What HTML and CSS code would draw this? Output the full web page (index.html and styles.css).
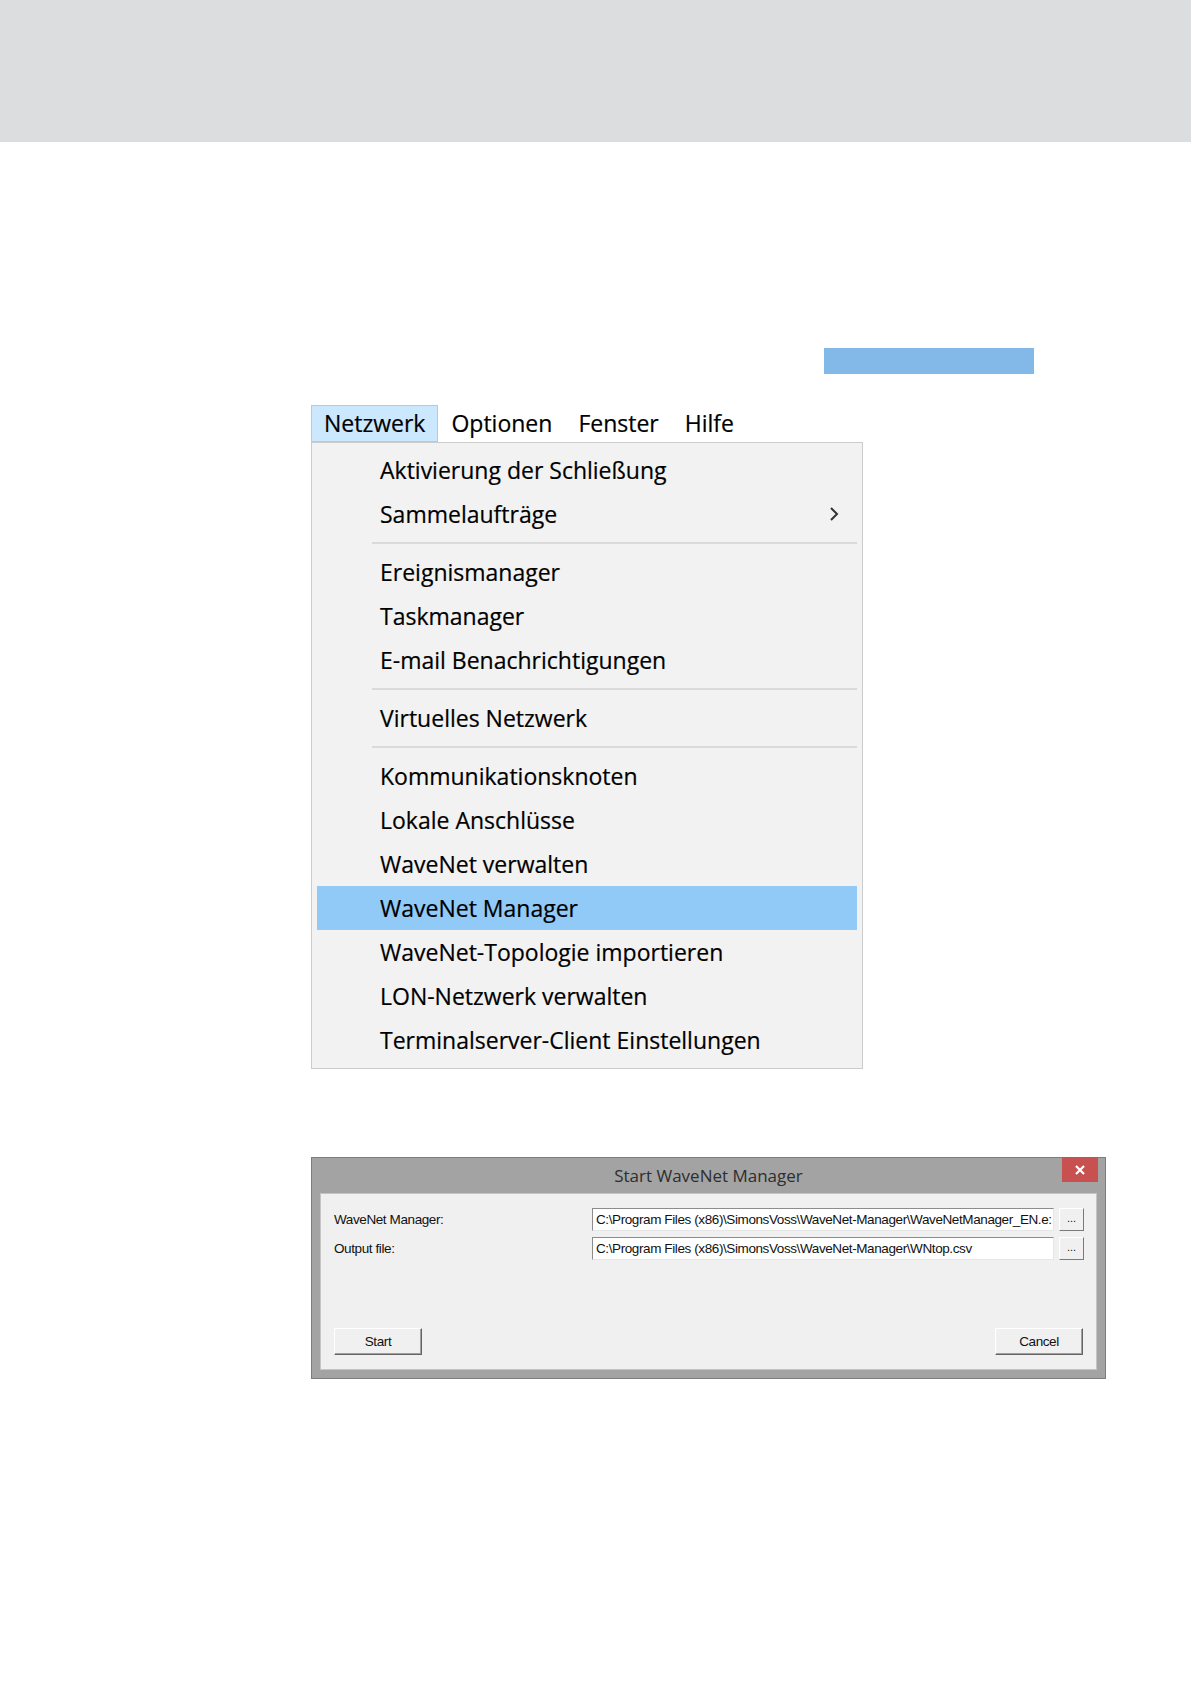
FILE: index.html
```html
<!DOCTYPE html>
<html lang="de">
<head>
    <meta charset="UTF-8">
    <meta name="viewport" content="width=device-width, initial-scale=1.0">
    <title>WaveNet Manager</title>
    <link rel="stylesheet" href="styles.css">
</head>
<body>
    <header class="top-band"></header>
    <main class="page">
        <div class="marker"></div>

        <nav class="menu">
            <ul class="menubar">
                <li class="menubar-item active">Netzwerk</li>
                <li class="menubar-item">Optionen</li>
                <li class="menubar-item">Fenster</li>
                <li class="menubar-item">Hilfe</li>
            </ul>
            <ul class="dropdown">
                <li class="entry">Aktivierung der Schließung</li>
                <li class="entry has-sub">Sammelaufträge
                    <svg class="sub-arrow" width="10" height="16" viewBox="0 0 10 16"><path d="M2 2 L8 8 L2 14" fill="none" stroke="#333" stroke-width="2"/></svg>
                </li>
                <li class="sep"></li>
                <li class="entry">Ereignismanager</li>
                <li class="entry">Taskmanager</li>
                <li class="entry">E-mail Benachrichtigungen</li>
                <li class="sep"></li>
                <li class="entry">Virtuelles Netzwerk</li>
                <li class="sep"></li>
                <li class="entry">Kommunikationsknoten</li>
                <li class="entry">Lokale Anschlüsse</li>
                <li class="entry">WaveNet verwalten</li>
                <li class="entry selected">WaveNet Manager</li>
                <li class="entry">WaveNet-Topologie importieren</li>
                <li class="entry">LON-Netzwerk verwalten</li>
                <li class="entry">Terminalserver-Client Einstellungen</li>
            </ul>
        </nav>

        <section class="dialog">
            <div class="titlebar">
                <span class="title">Start WaveNet Manager</span>
                <span class="close">
                    <svg width="12" height="12" viewBox="0 0 12 12"><path d="M2 2 L10 10 M10 2 L2 10" stroke="#fff" stroke-width="2.2"/></svg>
                </span>
            </div>
            <div class="client">
                <div class="row">
                    <span class="label">WaveNet Manager:</span>
                    <span class="field">C:\Program Files (x86)\SimonsVoss\WaveNet-Manager\WaveNetManager_EN.e:</span>
                    <span class="browse">...</span>
                </div>
                <div class="row">
                    <span class="label">Output file:</span>
                    <span class="field">C:\Program Files (x86)\SimonsVoss\WaveNet-Manager\WNtop.csv</span>
                    <span class="browse">...</span>
                </div>
                <div class="actions">
                    <span class="btn">Start</span>
                    <span class="btn">Cancel</span>
                </div>
            </div>
        </section>
    </main>
</body>
</html>
```

FILE: styles.css
```css
*,
*::before,
*::after {
    box-sizing: border-box;
    margin: 0;
    padding: 0;
}

body {
    background-color: #fff;
    font-family: "Open Sans", "Noto Sans", sans-serif;
    color: #000;
}

.top-band {
    height: 142px;
    background-color: #dcddde;
}

.page {
    padding: 206px 0 0 311px;
}

.marker {
    width: 210px;
    height: 26px;
    margin-left: 513px;
    background-color: #82b9e8;
}

/* menu */

.menu {
    margin-top: 31px;
    width: 552px;
}

.menubar {
    display: flex;
    height: 37px;
    list-style: none;
    font-size: 23px;
    -webkit-text-stroke: 0.2px #000;
}

.menubar-item {
    padding: 0 12px;
    line-height: 35px;
    border: 1px solid transparent;
}

.menubar-item.active {
    background-color: #cce8ff;
    border-color: #99d1ff;
}

.dropdown {
    list-style: none;
    padding: 5px 0 6px;
    border: 1px solid #cccccc;
    background-color: #f2f2f2;
    font-size: 23px;
    -webkit-text-stroke: 0.2px #000;
}

.entry {
    display: flex;
    align-items: center;
    height: 44px;
    margin: 0 5px;
    padding-left: 63px;
}

.entry.selected {
    background-color: #91c9f7;
}

.has-sub {
    justify-content: space-between;
    padding-right: 18px;
}

.sep {
    height: 14px;
    margin: 0 5px 0 60px;
    display: flex;
    align-items: center;
}

.sep::after {
    content: '';
    flex: 1;
    height: 2px;
    background-color: #dadada;
}

/* dialog */

.dialog {
    margin-top: 88px;
    width: 795px;
    height: 222px;
    display: flex;
    flex-direction: column;
    padding: 0 8px 8px;
    background-color: #a3a3a3;
    border: 1px solid #7d7d7d;
}

.titlebar {
    height: 35px;
    display: flex;
    align-items: center;
    justify-content: center;
    position: relative;
}

.title {
    font-size: 17px;
    color: #2e2e2e;
}

.close {
    position: absolute;
    top: -1px;
    right: -1px;
    width: 36px;
    height: 25px;
    display: flex;
    align-items: center;
    justify-content: center;
    background-color: #c75050;
}

.client {
    flex: 1;
    display: flex;
    flex-direction: column;
    padding: 14px 12px 14px 13px;
    background-color: #f0f0f0;
    border: 1px solid #c4c4c4;
    font-family: "Liberation Sans", Arial, sans-serif;
    font-size: 13.5px;
    letter-spacing: -0.4px;
    color: #111;
}

.row {
    display: flex;
    align-items: center;
    height: 23px;
    margin-bottom: 6px;
}

.label {
    width: 258px;
}

.field {
    width: 462px;
    height: 23px;
    line-height: 21px;
    padding-left: 3px;
    overflow: hidden;
    white-space: nowrap;
    background-color: #fff;
    border: 1px solid;
    border-color: #8c8c8c #e6e6e6 #e6e6e6 #8c8c8c;
}

.browse {
    width: 25px;
    height: 23px;
    margin-left: 5px;
    text-align: center;
    line-height: 19px;
    font-size: 11px;
    letter-spacing: 0;
    background-color: #f0f0f0;
    border: 1px solid;
    border-color: #fff #7a7a7a #7a7a7a #fff;
}

.actions {
    margin-top: auto;
    display: flex;
    justify-content: space-between;
    padding-right: 1px;
}

.btn {
    width: 88px;
    height: 27px;
    line-height: 25px;
    text-align: center;
    background-color: #f0f0f0;
    border: 1px solid;
    border-color: #fff #646464 #646464 #fff;
    box-shadow: inset -1px -1px 0 #a0a0a0;
}
```
